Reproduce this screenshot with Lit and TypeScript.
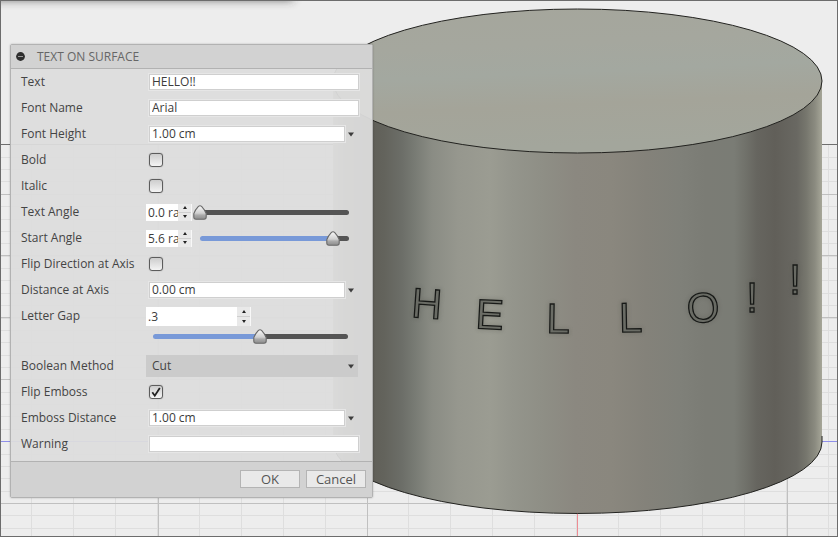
import { LitElement, html, css, svg, nothing } from "lit";
import { customElement, property, state } from "lit/decorators.js";

const range = (from: number, to: number, step: number) => {
  const out: number[] = [];
  for (let v = from; v <= to; v += step) out.push(v);
  return out;
};

const engraved = [
  { char: "H", x: 426, y: 318, turn: 4 },
  { char: "E", x: 489, y: 329, turn: 3 },
  { char: "L", x: 558, y: 333, turn: 1 },
  { char: "L", x: 631, y: 332, turn: -1 },
  { char: "O", x: 704, y: 322, turn: -4 },
  { char: "!", x: 752, y: 312, turn: 0 },
  { char: "!", x: 795, y: 294, turn: 0 },
];

const sideStops: [number, string][] = [
  [333, "#a3a398"],
  [345, "#77776e"],
  [372, "#605f58"],
  [384, "#63635c"],
  [402, "#6c6e68"],
  [414, "#777a73"],
  [432, "#8a8c84"],
  [458, "#96978e"],
  [490, "#9b9c92"],
  [512, "#94958c"],
  [545, "#8e8e85"],
  [575, "#8b8880"],
  [612, "#8a877e"],
  [645, "#84827a"],
  [680, "#7f8079"],
  [705, "#7b7c75"],
  [734, "#7a7c75"],
  [745, "#71726b"],
  [757, "#66655f"],
  [775, "#615f59"],
  [797, "#696862"],
  [806, "#76766d"],
  [815, "#8b8b80"],
  [822, "#a6a698"],
];

@customElement("model-canvas")
export class ModelCanvas extends LitElement {
  static styles = css`
    :host {
      display: block;
      overflow: hidden;
    }
    .scene {
      display: block;
      width: 100%;
      height: 100%;
    }
    .minor {
      stroke: #dedede;
      stroke-width: 1;
    }
    .major {
      stroke: #c0c0c0;
      stroke-width: 1;
    }
    .horizon {
      stroke: #6e6e6e;
    }
    .axis-blue {
      stroke: #8f8fea;
    }
    .axis-red {
      stroke: #ee8c93;
    }
    .edge {
      fill: none;
      stroke: #22221f;
      stroke-width: 1;
    }
    .engraving {
      opacity: 0.95;
    }
    .letter {
      font: 42px "Liberation Sans", sans-serif;
      text-anchor: middle;
      fill: #696b64;
      stroke: #121412;
      stroke-width: 1.3;
    }
    .glow {
      fill: #55564f;
      stroke: #55564f;
      stroke-width: 3;
      opacity: 0.3;
    }
  `;

  render() {
    const minorX = range(1, 20, 1).map((i) => Math.round(32.4 + (i - 1) * 41.9) - 0.5);
    const minorY = range(0, 30, 1).map((i) => Math.round(156.7 + i * 12.37) + 0.5);
    return html`
      <svg class="scene" viewBox="0 0 838 537" preserveAspectRatio="xMidYMid slice" role="img" aria-label="Cylinder with engraved lettering">
        <defs>
          <linearGradient id="side" gradientUnits="userSpaceOnUse" x1="333" y1="0" x2="822" y2="0">
            ${sideStops.map(([x, c]) => svg`<stop offset=${(x - 333) / 489} stop-color=${c}></stop>`)}
          </linearGradient>
          <linearGradient id="cap" x1="0" y1="0" x2="0.15" y2="1">
            <stop offset="0" stop-color="#a5a69c"></stop>
            <stop offset="0.3" stop-color="#a5a79e"></stop>
            <stop offset="0.5" stop-color="#a3a8a0"></stop>
            <stop offset="0.72" stop-color="#a4a499"></stop>
            <stop offset="1" stop-color="#a3a69c"></stop>
          </linearGradient>
          <filter id="soft" x="-20%" y="-200%" width="140%" height="500%">
            <feGaussianBlur stdDeviation="5"></feGaussianBlur>
          </filter>
          <filter id="halo"><feGaussianBlur stdDeviation="2"></feGaussianBlur></filter>
        </defs>
        <rect width="838" height="537" fill="#ededed"></rect>
        ${minorX.map((x) => svg`<line class="minor" x1=${x} x2=${x} y1="145" y2="537"></line>`)}
        ${minorY.map((y) => svg`<line class="minor" x1="0" x2="838" y1=${y} y2=${y}></line>`)}
        ${[158.5, 367.5, 787.5].map((x) => svg`<line class="major" x1=${x} x2=${x} y1="145" y2="537"></line>`)}
        ${[194.5, 255.5, 317.5, 379.5, 503.5].map((y) => svg`<line class="major" x1="0" x2="838" y1=${y} y2=${y}></line>`)}
        <line class="horizon" x1="0" x2="838" y1="144.5" y2="144.5"></line>
        <line class="axis-blue" x1="0" x2="838" y1="441.5" y2="441.5"></line>
        <line class="axis-red" x1="577.5" x2="577.5" y1="145" y2="537"></line>
        <rect x="-20" y="-18" width="313" height="18" fill="#333" opacity="0.7" filter="url(#soft)"></rect>

        <path fill="url(#side)" d="M333 81V442A244.500 71.500 0 0 0 822 442V81Z"></path>
        <path class="edge" d="M333 442A244.500 71.500 0 0 0 822 442V436"></path>
        <ellipse cx="577.500" cy="81" rx="244.500" ry="72" fill="url(#cap)"></ellipse>
        <ellipse class="edge" cx="577.500" cy="81" rx="244.500" ry="72"></ellipse>

        <g class="engraving">
          ${engraved.map(
            (l) => svg`
            <text class="letter glow" filter="url(#halo)" aria-hidden="true" x=${l.x} y=${l.y} transform="rotate(${l.turn} ${l.x} ${l.y})">${l.char}</text>
            <text class="letter" x=${l.x} y=${l.y} transform="rotate(${l.turn} ${l.x} ${l.y})">${l.char}</text>`
          )}
        </g>
      </svg>
    `;
  }
}

type Kind = "text" | "combo" | "check" | "angle" | "gap" | "select";

interface Field {
  id: string;
  label: string;
  kind: Kind;
  value?: string;
  checked?: boolean;
  fill?: number;
}

const fields: Field[] = [
  { id: "text", label: "Text", kind: "text", value: "HELLO!!" },
  { id: "font-name", label: "Font Name", kind: "text", value: "Arial" },
  { id: "font-height", label: "Font Height", kind: "combo", value: "1.00 cm" },
  { id: "bold", label: "Bold", kind: "check" },
  { id: "italic", label: "Italic", kind: "check" },
  { id: "text-angle", label: "Text Angle", kind: "angle", value: "0.0 rad", fill: 0 },
  { id: "start-angle", label: "Start Angle", kind: "angle", value: "5.6 rad", fill: 89 },
  { id: "flip-direction", label: "Flip Direction at Axis", kind: "check" },
  { id: "axis-distance", label: "Distance at Axis", kind: "combo", value: "0.00 cm" },
  { id: "letter-gap", label: "Letter Gap", kind: "gap", value: ".3", fill: 55 },
  { id: "boolean-method", label: "Boolean Method", kind: "select", value: "Cut" },
  { id: "flip-emboss", label: "Flip Emboss", kind: "check", checked: true },
  { id: "emboss-distance", label: "Emboss Distance", kind: "combo", value: "1.00 cm" },
  { id: "warning", label: "Warning", kind: "text", value: "" },
];

@customElement("value-slider")
export class ValueSlider extends LitElement {
  @property() label = "";
  @property({ type: Number }) value = 0;

  static styles = css`
    :host {
      display: block;
    }
    .track {
      display: grid;
      align-items: center;
    }
    .bar {
      grid-area: 1 / 1;
      height: 5px;
      border-radius: 3px;
      background: linear-gradient(to right, #7899d8 var(--fill), #545454 var(--fill));
    }
    .slider {
      grid-area: 1 / 1;
      appearance: none;
      display: block;
      height: 16px;
      margin: 0 -7px;
      background: none;
    }
    .slider::-webkit-slider-runnable-track {
      height: 15px;
    }
    .slider::-webkit-slider-thumb {
      appearance: none;
      width: 14px;
      height: 15px;
      border: 0;
      background: url("data:image/svg+xml,%3Csvg xmlns='http://www.w3.org/2000/svg' viewBox='0 0 14 15'%3E%3Cdefs%3E%3ClinearGradient id='g' x2='0' y2='1'%3E%3Cstop stop-color='%23f8f8f8'/%3E%3Cstop offset='.55' stop-color='%23d0d0d0'/%3E%3Cstop offset='.7' stop-color='%23aaa'/%3E%3Cstop offset='1' stop-color='%238c8c8c'/%3E%3C/linearGradient%3E%3C/defs%3E%3Cpath d='M5.2 1.6Q7-.1 8.800 1.600Q11.800 4.800 13.200 8.600V12Q13.200 14.200 11 14.200H3Q.8 14.200.8 12V8.600Q2.200 4.800 5.200 1.600Z' fill='url(%23g)' stroke='%23686868' stroke-width='1.100'/%3E%3C/svg%3E")
        center / 14px 15px no-repeat;
    }
  `;

  render() {
    return html`<div class="track">
      <div class="bar" style="--fill: ${this.value}%"></div>
      <input
        class="slider"
        type="range"
        min="0"
        max="100"
        aria-label=${this.label}
        .value=${String(this.value)}
        @input=${(e: Event) => (this.value = Number((e.target as HTMLInputElement).value))}
      />
    </div>`;
  }
}

@customElement("text-on-surface-panel")
export class TextOnSurfacePanel extends LitElement {
  @state() private open = true;

  static styles = css`
    :host {
      display: block;
      box-sizing: border-box;
      border: 1px solid #b2b2b2;
      border-radius: 2px;
      background: rgba(221, 221, 221, 0.94);
      box-shadow: 0 0 2px rgba(0, 0, 0, 0.25);
      color: #444;
      font: 12px/16px "Open Sans", "Noto Sans", sans-serif;
    }
    .header {
      display: flex;
      align-items: center;
      gap: 12px;
      height: 23px;
      padding: 0 5px;
      border-bottom: 1px solid #b2b2b2;
      background: #d2d2d2;
    }
    .title {
      margin: 0;
      color: #666;
      font-size: 12px;
      font-weight: 400;
    }
    .collapse {
      display: flex;
      padding: 0;
      border: 0;
      background: none;
    }
    .rows {
      padding: 0 13px 4px 10px;
    }
    .row {
      display: grid;
      grid-template-columns: 125px 1fr;
      align-items: center;
      height: 26px;
    }
    .row.tall {
      align-items: start;
      height: 50px;
    }
    .row.tall .label {
      padding-top: 5px;
    }
    .field,
    .spin-value {
      box-sizing: border-box;
      min-width: 0;
      margin: 0;
      border: 0;
      border-radius: 0;
      padding: 0 2px;
      background: #fff;
      color: #3c3c3c;
      font: inherit;
      outline: 0;
    }
    .field {
      flex: 1;
      height: 16px;
      border: 1px solid #cfcfcf;
      box-shadow: 0 0 0 1px #e6e6e6;
    }
    .control {
      display: flex;
      align-items: center;
      padding-left: 3px;
    }
    .drop {
      display: flex;
      justify-content: center;
      width: 14px;
      padding: 0 2px 0 0;
      border: 0;
      background: none;
    }
    .check {
      appearance: none;
      box-sizing: border-box;
      width: 14px;
      height: 14px;
      margin: 0;
      border: 1px solid #5c5c5c;
      border-radius: 3px;
      background: linear-gradient(#cdcdcd, #f4f4f4);
      box-shadow: 0 0 1px #777;
    }
    .check:checked {
      background: url("data:image/svg+xml,%3Csvg xmlns='http://www.w3.org/2000/svg' viewBox='0 0 12 12'%3E%3Cpath d='M2.300 6.200L4.800 9.700L9.800 2' fill='none' stroke='%23222' stroke-width='1.800'/%3E%3C/svg%3E")
          center / 12px 12px no-repeat,
        linear-gradient(#cdcdcd, #f4f4f4);
    }
    .angle {
      display: grid;
      grid-template-columns: 46px 1fr;
      align-items: center;
      gap: 8px;
      padding-right: 10px;
    }
    .spin {
      display: flex;
      height: 17px;
      border-right: 1px solid #f8f8f8;
    }
    .spin-value {
      flex: 1;
      height: 100%;
      padding-right: 0;
    }
    .stepper {
      display: flex;
      flex: none;
      flex-direction: column;
      gap: 1px;
      width: 13px;
      background: #cfcfcf;
    }
    .step {
      display: flex;
      flex: 1;
      align-items: center;
      justify-content: center;
      padding: 0;
      border: 0;
      background: #e9e9e9;
    }
    .gap {
      display: grid;
      gap: 2px;
      padding: 4px 11px 0 0;
    }
    .gap .spin {
      width: 104px;
      height: 19px;
    }
    .gap value-slider {
      margin-left: 7px;
    }
    .pick {
      display: grid;
      grid-template-columns: 1fr 14px;
      align-items: center;
      margin-right: 1px;
      background: #cbcbcb;
    }
    .select {
      appearance: none;
      grid-area: 1 / 1 / 2 / 3;
      height: 22px;
      padding: 0 6px;
      border: 0;
      background: none;
      color: #444;
      font: inherit;
    }
    .pick .arrow {
      grid-area: 1 / 2;
      justify-self: center;
      pointer-events: none;
    }
    .footer {
      display: flex;
      justify-content: flex-end;
      gap: 6px;
      padding: 8px 6px 9px;
      border-top: 1px solid #b2b2b2;
      background: #d2d2d2;
    }
    .button {
      box-sizing: border-box;
      width: 60px;
      height: 18px;
      padding: 0;
      border: 1px solid #b4b4b4;
      background: #e9e9e9;
      color: #555;
      font: 13px/16px "Open Sans", "Noto Sans", sans-serif;
    }
  `;

  private arrow() {
    return html`<svg class="arrow" width="6" height="5" viewBox="0 0 6 5" aria-hidden="true"><path d="M0 0.500H6L3 4.500Z" fill="#3c3c3c" /></svg>`;
  }

  private spin(f: Field) {
    return html`<div class="spin">
      <input class="spin-value" id=${f.id} type="text" .value=${f.value ?? ""} />
      <div class="stepper">
        <button class="step" type="button" aria-label="Increase ${f.label}">
          <svg width="4" height="3" viewBox="0 0 4 3"><path d="M0 3H4L2 0Z" fill="#222" /></svg>
        </button>
        <button class="step" type="button" aria-label="Decrease ${f.label}">
          <svg width="4" height="3" viewBox="0 0 4 3"><path d="M0 0H4L2 3Z" fill="#222" /></svg>
        </button>
      </div>
    </div>`;
  }

  private control(f: Field) {
    switch (f.kind) {
      case "text":
        return html`<div class="control"><input class="field" id=${f.id} type="text" .value=${f.value ?? ""} /></div>`;
      case "combo":
        return html`<div class="control">
          <input class="field" id=${f.id} type="text" .value=${f.value ?? ""} />
          <button class="drop" type="button" aria-label="${f.label} options">${this.arrow()}</button>
        </div>`;
      case "check":
        return html`<div class="control"><input class="check" id=${f.id} type="checkbox" ?checked=${f.checked} /></div>`;
      case "angle":
        return html`<div class="angle">${this.spin(f)}<value-slider label=${f.label} .value=${f.fill ?? 0}></value-slider></div>`;
      case "gap":
        return html`<div class="gap">${this.spin(f)}<value-slider label=${f.label} .value=${f.fill ?? 0}></value-slider></div>`;
      case "select":
        return html`<div class="pick">
          <select class="select" id=${f.id}><option>${f.value}</option></select>
          ${this.arrow()}
        </div>`;
    }
  }

  render() {
    return html`
      <header class="header">
        <button class="collapse" type="button" aria-label="Collapse" @click=${() => (this.open = !this.open)}>
          <svg width="9" height="9" viewBox="0 0 9 9"><circle cx="4.500" cy="4.500" r="4.400" fill="#2e2e2e" /><path d="M2 4.500H7" stroke="#999" /></svg>
        </button>
        <h1 class="title">TEXT ON SURFACE</h1>
      </header>
      ${this.open
        ? html`<div class="rows">
            ${fields.map(
              (f) => html`<div class="row ${f.kind === "gap" ? "tall" : ""}">
                <label class="label" for=${f.id}>${f.label}</label>
                ${this.control(f)}
              </div>`
            )}
          </div>`
        : nothing}
      <footer class="footer">
        <button class="button" type="button">OK</button>
        <button class="button" type="button">Cancel</button>
      </footer>
    `;
  }
}

@customElement("app-root")
export class AppRoot extends LitElement {
  static styles = css`
    :host {
      display: grid;
      box-sizing: border-box;
      min-height: 100vh;
      background: #ededed;
    }
    .view,
    .overlay,
    .frame {
      grid-area: 1 / 1;
    }
    .view {
      min-height: 0;
      height: 100vh;
    }
    .overlay {
      align-self: start;
      width: 363px;
      max-width: 100%;
      margin: 44px 0 0 10px;
    }
    .frame {
      border: 1px solid #6c6c6c;
      pointer-events: none;
    }
  `;

  render() {
    return html`
      <model-canvas class="view"></model-canvas>
      <text-on-surface-panel class="overlay"></text-on-surface-panel>
      <div class="frame"></div>
    `;
  }
}
